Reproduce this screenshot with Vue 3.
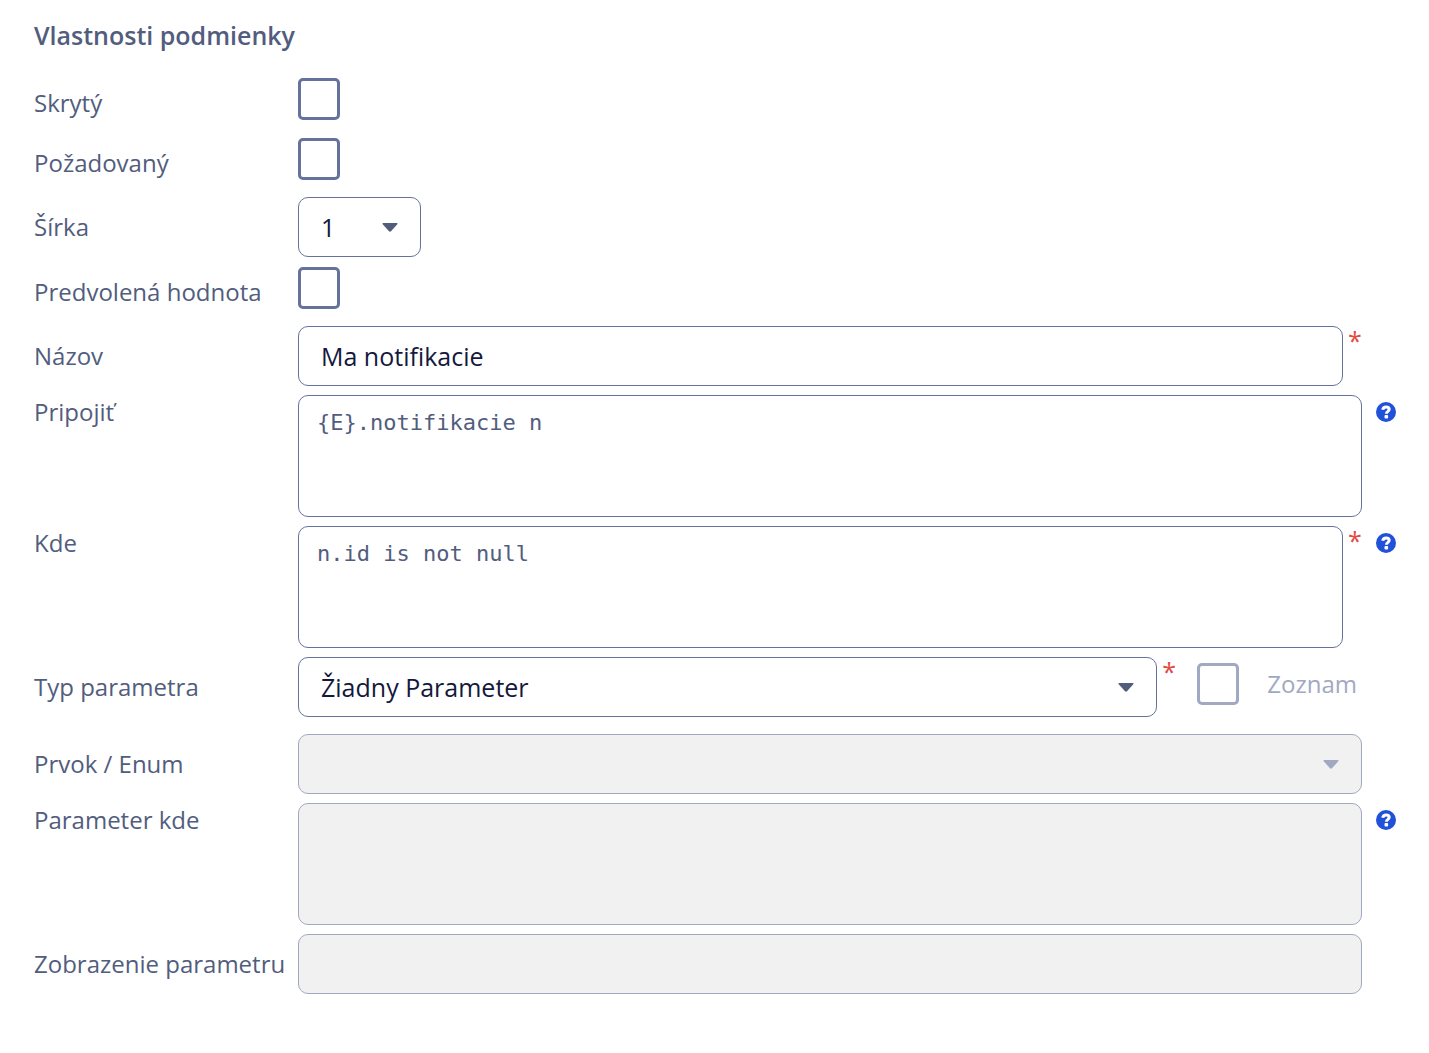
<script setup>
import { ref } from 'vue'

const hidden = ref(false)
const required = ref(false)
const width = ref('1')
const preset = ref(false)
const name = ref('Ma notifikacie')
const join = ref('{E}.notifikacie n')
const where = ref('n.id is not null')
const paramType = ref('none')
const list = ref(false)
</script>

<template>
  <form class="panel" @submit.prevent>
    <h2 class="title">Vlastnosti podmienky</h2>

    <div class="row check-row">
      <label for="hidden">Skrytý</label>
      <div class="field"><input id="hidden" v-model="hidden" type="checkbox" class="check" /></div>
    </div>

    <div class="row check-row">
      <label for="required">Požadovaný</label>
      <div class="field"><input id="required" v-model="required" type="checkbox" class="check" /></div>
    </div>

    <div class="row">
      <label for="width">Šírka</label>
      <div class="field">
        <div class="select narrow">
          <select id="width" v-model="width" class="box">
            <option>1</option>
            <option>2</option>
            <option>3</option>
          </select>
          <svg class="caret" viewBox="0 0 16 9" aria-hidden="true"><path d="M1.2 0h13.6q1.2.3.5 1.3L9 8.2q-1 .9-2 0L.7 1.3Q0 .3 1.2 0z" /></svg>
        </div>
      </div>
    </div>

    <div class="row check-row">
      <label for="preset">Predvolená hodnota</label>
      <div class="field"><input id="preset" v-model="preset" type="checkbox" class="check" /></div>
    </div>

    <div class="row">
      <label for="name">Názov</label>
      <div class="field">
        <input id="name" v-model="name" type="text" class="box" required />
        <span class="star">*</span>
      </div>
    </div>

    <div class="row area-row">
      <label for="join">Pripojiť</label>
      <div class="field"><textarea id="join" v-model="join" class="box" spellcheck="false"></textarea></div>
      <button type="button" class="help" aria-label="Pomoc">
        <svg viewBox="0 0 20 20" aria-hidden="true"><circle cx="10" cy="10" r="10" /><path d="M6.7 7.7C7.1 5.6 8.4 4.9 10.1 4.9c1.8 0 3.1.9 3.1 2.4 0 2.1-2.8 2-2.8 4.4" /><rect x="8.5" y="13" width="3.6" height="3.6" rx="1" /></svg>
      </button>
    </div>

    <div class="row area-row">
      <label for="where">Kde</label>
      <div class="field">
        <textarea id="where" v-model="where" class="box" spellcheck="false" required></textarea>
        <span class="star">*</span>
      </div>
      <button type="button" class="help" aria-label="Pomoc">
        <svg viewBox="0 0 20 20" aria-hidden="true"><circle cx="10" cy="10" r="10" /><path d="M6.7 7.7C7.1 5.6 8.4 4.9 10.1 4.9c1.8 0 3.1.9 3.1 2.4 0 2.1-2.8 2-2.8 4.4" /><rect x="8.5" y="13" width="3.6" height="3.6" rx="1" /></svg>
      </button>
    </div>

    <div class="row">
      <label for="param-type">Typ parametra</label>
      <div class="field">
        <div class="select">
          <select id="param-type" v-model="paramType" class="box" required>
            <option value="none">Žiadny Parameter</option>
          </select>
          <svg class="caret" viewBox="0 0 16 9" aria-hidden="true"><path d="M1.2 0h13.6q1.2.3.5 1.3L9 8.2q-1 .9-2 0L.7 1.3Q0 .3 1.2 0z" /></svg>
        </div>
        <span class="star">*</span>
        <div class="list-option">
          <input id="list" v-model="list" type="checkbox" class="check" disabled />
          <label for="list">Zoznam</label>
        </div>
      </div>
    </div>

    <div class="row spaced">
      <label for="element">Prvok / Enum</label>
      <div class="field">
        <div class="select">
          <select id="element" class="box" disabled></select>
          <svg class="caret muted" viewBox="0 0 16 9" aria-hidden="true"><path d="M1.2 0h13.6q1.2.3.5 1.3L9 8.2q-1 .9-2 0L.7 1.3Q0 .3 1.2 0z" /></svg>
        </div>
      </div>
    </div>

    <div class="row area-row">
      <label for="param-where">Parameter kde</label>
      <div class="field"><textarea id="param-where" class="box" disabled></textarea></div>
      <button type="button" class="help" aria-label="Pomoc">
        <svg viewBox="0 0 20 20" aria-hidden="true"><circle cx="10" cy="10" r="10" /><path d="M6.7 7.7C7.1 5.6 8.4 4.9 10.1 4.9c1.8 0 3.1.9 3.1 2.4 0 2.1-2.8 2-2.8 4.4" /><rect x="8.5" y="13" width="3.6" height="3.6" rx="1" /></svg>
      </button>
    </div>

    <div class="row">
      <label for="param-display">Zobrazenie parametru</label>
      <div class="field"><input id="param-display" type="text" class="box" disabled /></div>
    </div>
  </form>
</template>

<style>
body {
  background: #fff;
}
</style>

<style scoped>
.panel {
  box-sizing: border-box;
  display: flex;
  flex-direction: column;
  padding: 18px 33px 32px 34px;
  font-family: "Open Sans", sans-serif;
  font-size: 25px;
  line-height: 34px;
  color: #525d7e;
}

.title {
  margin: 0 0 21px;
  font-size: 25px;
  font-weight: 600;
}

.row {
  display: grid;
  grid-template-columns: 264px minmax(0, 1fr) 34px;
  align-items: center;
  margin: 4px 0 5px;
}

label {
  font-size: 24px;
  white-space: nowrap;
}

.check-row {
  height: 60px;
  margin: 0;
}

.check-row .field {
  align-self: start;
  padding-top: 5px;
}

.area-row {
  align-items: start;
}

.spaced {
  margin-top: 12px;
}

.field {
  display: flex;
  align-items: flex-start;
}

.box {
  box-sizing: border-box;
  flex: 1;
  display: block;
  width: 100%;
  min-width: 0;
  height: 60px;
  margin: 0;
  padding: 0 22px;
  border: 1px solid #65739c;
  border-radius: 10px;
  background: #fff;
  color: #14183c;
  font: inherit;
  appearance: none;
}

textarea.box {
  height: 122px;
  padding: 10px 18px;
  color: #525d7e;
  font-family: "DejaVu Sans Mono", monospace;
  font-size: 22px;
  line-height: 34px;
  resize: none;
}

.box:disabled {
  border-color: #a1a9c2;
  background: #f1f1f1;
  opacity: 1;
}

.select {
  position: relative;
  flex: 1;
}

.select.narrow {
  flex: 0 0 123px;
}

.caret {
  position: absolute;
  top: 26px;
  right: 23px;
  width: 16px;
  height: 9px;
  fill: #525d7e;
  pointer-events: none;
}

.caret.muted {
  fill: #a1a9c2;
}

.check {
  box-sizing: border-box;
  flex: none;
  width: 42px;
  height: 42px;
  margin: 0;
  border: 3px solid #65739c;
  border-radius: 5px;
  background: #fff;
  appearance: none;
}

.check:checked {
  background: #65739c;
}

.check:disabled {
  border-color: #a1a9c2;
}

.star {
  box-sizing: border-box;
  flex: none;
  width: 19px;
  padding-left: 5px;
  color: #e34843;
  line-height: 28px;
}

.list-option {
  display: flex;
  align-items: center;
  gap: 28px;
  padding: 6px 5px 0 21px;
  color: #a1a9c2;
}

.help {
  justify-self: end;
  width: 20px;
  height: 20px;
  margin: 7px 0 0;
  padding: 0;
  border: 0;
  background: none;
}

.help svg {
  display: block;
  width: 20px;
  height: 20px;
}

.help circle {
  fill: #2150d9;
}

.help path {
  fill: none;
  stroke: #fff;
  stroke-width: 3;
}

.help rect {
  fill: #fff;
}
</style>
